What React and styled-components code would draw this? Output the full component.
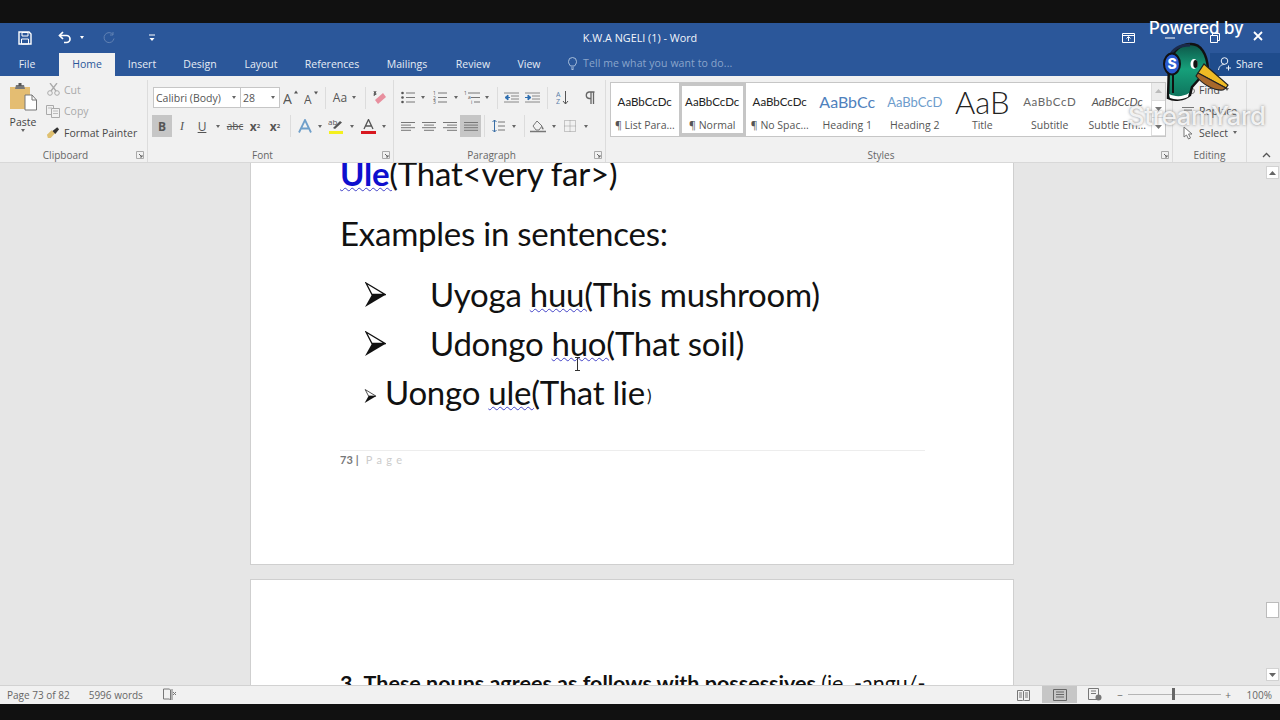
import React from 'react';
import styled, { createGlobalStyle } from 'styled-components';

const Global = createGlobalStyle`
  html, body { margin: 0; padding: 0; background: #111; }
  * { box-sizing: border-box; }
`;
const Root = styled.div`
  position: relative; width: 1280px; height: 720px; overflow: hidden; display: flex; flex-direction: column;
  font-family: "Open Sans", "Noto Sans", sans-serif; background: #111; color: #444;
`;
const Letterbox = styled.div`height: ${p => p.$h}px; background: #111; flex: none;`;
const TitleBar = styled.header`
  display: grid; grid-template-columns: 1fr auto 1fr; align-items: center; height: 29px; background: #2b579a; color: #fff; flex: none;
`;
const QuickAccess = styled.div`display: flex; align-items: center; padding-left: 17px;`;
const QuickBtn = styled.span`display: inline-flex; justify-content: center; align-items: center; width: ${p => p.$w}px; margin-right: ${p => p.$mr || 0}px; color: #fff; opacity: ${p => p.$faded ? .25 : 1};`;
const DocTitle = styled.div`font-size: 10.8px; color: #f2f5fa; padding-top: 0;`;
const WindowBtns = styled.div`display: flex; align-items: center; justify-content: flex-end;`;
const WinBtn = styled.span`display: inline-flex; justify-content: center; width: 44px; padding-left: ${p => p.$pl || 0}px; color: #fff;`;
const TabBar = styled.nav`display: flex; align-items: stretch; height: 24px; background: #2b579a; flex: none;`;
const Tab = styled.div`
  display: flex; align-items: center; justify-content: center; width: ${p => p.$w}px; margin-right: ${p => p.$mr || 0}px; font-size: 10.5px; padding-bottom: 2px; color: ${p => p.$active ? '#2b579a' : '#e6ecf5'};
  background: ${p => p.$active ? '#f1f1f1' : 'transparent'}; margin-top: 1px;
`;
const TellMe = styled.div`display: flex; align-items: center; gap: 6px; margin-left: 15px; font-size: 10.5px; letter-spacing: .1px; color: #8aa5cb; padding-bottom: 2px;`;
const Share = styled.div`
  margin-left: auto; width: 70px; background: #1f4c8c; display: flex; align-items: center; gap: 4px; padding: 0 0 2px 8px; color: #eef2f8; font-size: 10px; margin-top: 1px;
`;
const Ribbon = styled.div`display: flex; height: 87px; background: #f1f1f1; border-bottom: 1px solid #d8d8d8; padding-top: 4px; flex: none;`;
const Group = styled.section`display: flex; flex-direction: column; width: ${p => p.$w}px; border-right: 1px solid #dcdcdc; flex: none;`;
const GroupBody = styled.div`flex: 1; min-height: 0; display: flex; padding: ${p => p.$pad || '0'};`;
const GroupFoot = styled.div`
  height: 17px; display: grid; grid-template-columns: 1fr auto 1fr; align-items: center; font-size: 10px; color: #666; padding: 2px ${p => p.$plain ? 3 : 19}px 0 3px;
`;
const Launcher = styled.span`grid-column: 3; justify-self: end; display: inline-flex; color: #888; margin-right: -16px;`;
const PasteCol = styled.div`width: 46px; display: flex; flex-direction: column; align-items: center; padding-top: 3px; font-size: 10.5px; color: #444; flex: none;`;
const PasteLabel = styled.span`margin-top: 4px; line-height: 14px;`;
const ClipCol = styled.div`display: flex; flex-direction: column; flex: 1; margin-top: -1px;`;
const ClipRow = styled.div`
  height: 21.5px; display: flex; align-items: center; gap: 4px; font-size: 10.5px; white-space: nowrap; color: ${p => p.$muted ? '#a9a9a9' : '#4a4a4a'};
`;
const ClipIcon = styled.span`display: inline-flex; width: 14px; justify-content: center; flex: none;`;
const ToolStack = styled.div`display: flex; flex-direction: column; gap: 7px; padding-top: 7px;`;
const ToolRow = styled.div`display: flex; align-items: center; height: ${p => p.$h || 21}px; margin-left: ${p => p.$ml || 0}px;`;
const Tool = styled.span`
  display: inline-flex; align-items: center; justify-content: center; width: ${p => p.$w}px; height: 100%; flex: none; color: #555; font-size: 12px;
  background: ${p => p.$on ? '#c6c6c6' : 'transparent'}; font-family: ${p => p.$serif ? '"Liberation Serif", serif' : 'inherit'};
  font-weight: ${p => p.$bold ? 700 : 400}; font-style: ${p => p.$it ? 'italic' : 'normal'};
  text-decoration: ${p => p.$deco || 'none'};
`;
const SmallTool = styled(Tool)`font-size: 10px;`;
const Caret = styled.span`
  display: inline-flex; justify-content: center; align-items: center; width: ${p => p.$w || 6}px; flex: none;
  &::before { content: ""; border-left: 2.5px solid transparent; border-right: 2.5px solid transparent; border-top: 3px solid ${p => p.$light ? '#fff' : '#666'}; }
`;
const RibbonSep = styled.span`width: 1px; height: 22px; background: #dcdcdc; flex: none; margin-left: ${p => p.$ml || 0}px; margin-right: ${p => p.$mr || 0}px;`;
const SelectBox = styled.div`
  display: flex; align-items: center; justify-content: space-between; width: ${p => p.$w}px; height: 21px; flex: none; background: #fff; border: 1px solid #c6c6c6;
  margin-left: ${p => p.$ml || 0}px; padding: 0 3px 0 2px; font-size: 10.5px; color: #555; white-space: nowrap;
`;
const Sub = styled.sub`font-size: 6px;`;
const Sup = styled.sup`font-size: 6px;`;
const Gallery = styled.div`display: flex; height: 55px; width: 556px; margin-left: 4px; margin-top: 2px; background: #fff; border: 1px solid #c6c6c6;`;
const StyleItem = styled.div`
  width: 67.5px; flex: none; display: flex; flex-direction: column; align-items: center; overflow: hidden; height: 53px;
  padding: ${p => p.$sel ? '1px 2px 0' : '4px 4px 0'}; border: ${p => p.$sel ? '3px solid #c6c6c6' : '0'};
`;
const StyleSample = styled.div`
  height: 30px; line-height: 30px; width: 100%; overflow: hidden; white-space: nowrap; text-align: center; font-family: Lato, sans-serif;
  font-size: ${p => p.$size || 11.5}px; color: ${p => p.$color || '#222'}; letter-spacing: ${p => p.$ls || 0}px; font-style: ${p => p.$it ? 'italic' : 'normal'};
  font-weight: ${p => p.$light ? 300 : 400};
`;
const StyleLabel = styled.div`font-size: 10.5px; color: #555; white-space: nowrap; margin-top: 1px; line-height: 14px; overflow: hidden; width: 100%; text-align: center;`;
const GalleryScroll = styled.div`flex: 1; display: flex; flex-direction: column; border-left: 1px solid #dcdcdc;`;
const ScrollBtn = styled.span`flex: 1; display: flex; align-items: center; justify-content: center; background: ${p => p.$dim ? '#ececec' : '#fff'}; border-bottom: 1px solid #dcdcdc;`;
const Collapse = styled.div`flex: 1; display: flex; align-items: flex-end; justify-content: flex-end; padding: 0 9px 4px 0; color: #555;`;
const Doc = styled.main`flex: 1; min-height: 0; display: flex; background: #e6e6e6; overflow: hidden;`;
const Pages = styled.div`flex: 1; padding-left: 250px; display: flex; flex-direction: column; gap: 14px;`;
const Page = styled.article`
  position: relative; width: 764px; height: ${p => p.$h}px; flex: none; background: #fff; border: solid #cfcfcf; border-width: ${p => p.$top ? '1px 1px 0' : '0 1px 1px'};
  padding: ${p => p.$top ? '91px' : '0'} 88px 0 89px; overflow: hidden;
`;
const DocLine = styled.div`
  font-family: Lato, "Open Sans", sans-serif; font-size: 33px; height: 46px; line-height: 46px; color: #111; white-space: nowrap; margin-top: ${p => p.$mt}px; letter-spacing: -.25px;
  display: flex; align-items: center;
`;
const Squiggle = styled.span`text-decoration: underline wavy #4444c8 1px; text-underline-offset: 1px;`;
const BlueBold = styled.b`color: #0f0fce; font-weight: 700;`;
const SmallParen = styled.span`font-size: 17px; line-height: 18px; align-self: flex-end; padding-bottom: 10px; margin-left: 2px;`;
const BulletSlot = styled.span`display: inline-flex; width: ${p => p.$w}px; margin-left: ${p => p.$ml}px; margin-top: ${p => p.$mt || 0}px; align-items: center; flex: none;`;
const Pre = styled.span`white-space: pre;`;
const PageFooter = styled.footer`
  margin-top: 35px; border-top: 1px solid #ededed; padding-top: 1px; font-size: 11px; line-height: 16px; color: #777; font-family: Lato, sans-serif; font-weight: 700; display: flex; gap: 3px;
`;
const PageWord = styled.span`color: #ccc; font-weight: 400; letter-spacing: 4.4px; margin-left: 4px;`;
const NextHeading = styled.div`font-family: Lato, sans-serif; font-size: 21.5px; line-height: 24px; font-weight: 700; color: #111; white-space: pre; display: flex;`;
const NextNumber = styled.span`margin-right: 6px;`;
const NextNormal = styled.span`font-weight: 400;`;
const IBeam = styled.svg`position: absolute; left: 323px; top: 194px;`;
const ScrollBar = styled.aside`width: 16px; display: flex; flex-direction: column; align-items: center; padding: 3px 0 4px; flex: none;`;
const SbBtn = styled.span`width: 13px; height: 13px; background: #fff; border: 1px solid #d2d2d2; display: flex; align-items: center; justify-content: center;`;
const SbThumb = styled.span`width: 13px; height: 16px; background: #fff; border: 1px solid #bcbcbc; margin-top: 423px;`;
const SbGap = styled.span`flex: 1;`;
const Status = styled.footer`
  height: 19px; background: #f1f1f1; border-top: 1px solid #d2d2d2; display: flex; align-items: center; font-size: 10px; color: #666; padding: 0 0 1px 7px; flex: none;
`;
const StatusText = styled.span`margin-right: ${p => p.$mr}px; white-space: nowrap;`;
const StatusRight = styled.div`margin-left: auto; display: flex; align-items: center; height: 100%;`;
const ViewBtn = styled.span`display: inline-flex; align-items: center; justify-content: center; width: ${p => p.$w}px; height: 100%; background: ${p => p.$on ? '#c6c6c6' : 'transparent'}; color: #666;`;
const ZoomTrack = styled.span`position: relative; width: 93px; height: 1px; background: #b5b5b5; margin-left: 1px;`;
const ZoomThumb = styled.span`position: absolute; left: 44px; top: -6px; width: 3px; height: 12px; background: #666;`;
const ZoomLabel = styled.span`width: 45px; text-align: right; padding-right: 8px; font-size: 10px;`;
const PoweredBy = styled.div`position: absolute; left: 1149px; top: 18px; font-family: Inter, Lato, sans-serif; font-size: 16.8px; font-weight: 500; color: #fff; white-space: nowrap;`;
const CloseX = styled.svg`position: absolute; left: 1253px; top: 31px;`;
const Duck = styled.svg`position: absolute; left: 1160px; top: 41px;`;
const StreamYard = styled.div`
  position: absolute; left: 1128px; top: 100px; font-family: Inter, Lato, sans-serif; font-size: 25.6px; font-weight: 500; letter-spacing: -.3px; color: rgba(255,255,255,.85); white-space: nowrap;
  text-shadow: 0 0 3px rgba(110,110,110,.85);
`;

const S = ({ w, h, children, ...r }) => <svg width={w} height={h} viewBox={`0 0 ${w} ${h}`} fill="none" {...r}>{children}</svg>;
const LauncherIcon = () => <S w={8} h={8}><path d="M.5 7.5v-7h7v7z" stroke="#aaa" /><path d="M3 3l3 3M6 4v2H4" stroke="#666" /></S>;
const Lines = ({ rows, w = 14 }) => <S w={w} h={11}>{rows.map(([x1, x2], i) => <path key={i} d={`M${x1} ${1.5 + i * 2.6}H${x2}`} stroke="#777" />)}</S>;
const ListIcon = ({ marks }) => (
  <S w={14} h={13}>{[2, 6.5, 11].map((y, i) => <React.Fragment key={y}>
    {marks ? <text x="0" y={y + 2} fontSize="5" fill="#555" fontFamily="Open Sans">{i + 1}</text> : <circle cx="1.5" cy={y} r="1.3" fill="#555" />}
    <path d={`M5 ${y}H14`} stroke="#777" />
  </React.Fragment>)}</S>
);
const MultiIcon = () => <S w={16} h={13}><text x="0" y="4" fontSize="5" fill="#555" fontFamily="Open Sans">1</text><path d="M4 2h12M7 6.5h9M10 11h6" stroke="#777" /><text x="4" y="8" fontSize="5" fill="#555" fontFamily="Open Sans">a</text><text x="7" y="13" fontSize="5" fill="#555" fontFamily="Open Sans">i</text></S>;
const IndentIcon = ({ flip }) => <S w={15} h={11}><path d="M0 1h15M7 4h8M7 7h8M0 10h15" stroke="#888" /><path d={flip ? 'M0 5.5h4M3 3l3 2.5L3 8z' : 'M2 5.5h4M4 3L1 5.5 4 8z'} stroke="#2f6fb0" fill="#2f6fb0" /></S>;

const SaveIcon = () => <S w={14} h={14}><path d="M1 1h10l2 2v10H1z" stroke="#fff" strokeWidth="1.4" /><path d="M4 1.5h6v3.5H4zM3.5 8h7v5h-7z" stroke="#fff" /></S>;
const UndoIcon = () => <S w={15} h={13}><path d="M5 1L1.5 4.5 5 8" stroke="#fff" strokeWidth="1.7" /><path d="M2 4.5h6.5a3.5 3.5 0 0 1 0 7H6" stroke="#fff" strokeWidth="1.7" /></S>;
const RedoIcon = () => <S w={12} h={12}><path d="M10 2.5a5 5 0 1 0 1 4M10 0v3H7" stroke="#fff" /></S>;
const CustomizeIcon = () => <S w={6} h={8}><path d="M0 1h6" stroke="#fff" /><path d="M.5 4h5L3 7z" fill="#fff" /></S>;
const DisplayIcon = () => <S w={13} h={10}><path d="M.5.5h12v9H.5zM.5 2.5h12" stroke="#fff" /><path d="M6.5 8V4M4.5 5.5l2-2 2 2" stroke="#fff" /></S>;
const MinIcon = () => <S w={10} h={2}><path d="M0 1h10" stroke="#fff" /></S>;
const MaxIcon = () => <S w={10} h={10}><path d="M.5 2.5h7v7h-7zM2.5 2.5v-2h7v7h-2" stroke="#fff" /></S>;
const BulbIcon = () => <S w={9} h={13}><path d="M2.5 9C1.5 7.5.5 6.5.5 4.5a4 4 0 0 1 8 0c0 2-1 3-2 4.5zM3 11h3M3.5 12.5h2" stroke="#a9bfdc" /></S>;
const PersonIcon = () => <S w={14} h={14}><circle cx="6.5" cy="4" r="3.3" stroke="#eef2f8" /><path d="M.5 13c.5-4 3-5.5 6-5.5M10.5 8.500v5M8 11h5" stroke="#eef2f8" /></S>;
const PasteIcon = () => <S w={27} h={28}>
  <path d="M0 4h20v22H0z" fill="#e4bd72" /><path d="M6 2h8l1 4H5z" fill="#777" /><path d="M8.500 0h3v3h-3z" fill="#555" />
  <path d="M15 12h7l4.500 5v10H15z" fill="#fff" stroke="#777" /><path d="M22 12v5h4.500" stroke="#777" />
</S>;
const ScissorsIcon = () => <S w={13} h={13}><circle cx="3" cy="10" r="2.3" stroke="#aaa" /><circle cx="10" cy="10" r="2.3" stroke="#aaa" /><path d="M4 8l6-8M9 8L3 0" stroke="#aaa" strokeWidth="1.3" /></S>;
const CopyIcon = () => <S w={14} h={13}><path d="M.5.5h7v9h-7z" stroke="#aaa" fill="#f1f1f1" /><path d="M5.500 3.500h8v9h-8z" stroke="#aaa" fill="#f1f1f1" /><path d="M2 3h4M7 6h5M7 8.500h5" stroke="#bbb" /></S>;
const PainterIcon = () => <S w={15} h={13}><path d="M1 9l5-5 4 3-5 5.500H2z" fill="#dfc070" /><path d="M7 5l5-4 2 2-4 5z" fill="#333" /></S>;
const ClearIcon = () => <S w={15} h={14}><path d="M6 13l8-7-3-4-8 7z" fill="#e88f9e" /><path d="M2 0l1.500 4M4 0L2 5M1.500 3h3" stroke="#555" /></S>;
const GrowIcon = ({ up }) => <svg width="16" height="17" viewBox="0 0 16 17" fill="none"><text x="0" y="15" fontSize={up ? 14 : 12} fill="#555" fontFamily="Open Sans">A</text><path d={up ? 'M11 4.500h4l-2-3z' : 'M10 2.500h4l-2 3z'} fill="#555" /></svg>;
const EffectIcon = () => <S w={14} h={14}><path d="M1 13.500L7 1l6 12.500M3.500 9.500h7" stroke="#6f9fca" strokeWidth="1.800" /></S>;
const HighlightIcon = () => <S w={16} h={16}><text x="0" y="7" fontSize="8" fill="#555" fontFamily="Open Sans">ab</text><path d="M5 10l7-7 2 1.500L7 11z" fill="#555" /><path d="M1 13h14v3H1z" fill="#f4f01e" /></S>;
const ColorIcon = () => <S w={15} h={15}><path d="M3 10l4.500-9.500L12 10M4.500 7h6" stroke="#555" strokeWidth="1.300" /><path d="M0 12h15v3H0z" fill="#d81820" /></S>;
const SortIcon = () => <S w={13} h={15}><text x="0" y="6.500" fontSize="7" fill="#5a7ea8" fontFamily="Open Sans">A</text><text x="0" y="14" fontSize="7" fill="#5a7ea8" fontFamily="Open Sans">Z</text><path d="M9.500 1v13M7 11l2.500 3 2.500-3" stroke="#555" /></S>;
const PilcrowIcon = () => <S w={10} h={13}><path d="M6 1v12M8.500 1v12M9.500 1H4a3.300 3.300 0 0 0 0 6.500h2" stroke="#666" strokeWidth="1.300" /></S>;
const SpacingIcon = () => <S w={13} h={14}><path d="M2.500 1v12M.5 3l2-2 2 2M.5 11l2 2 2-2" stroke="#3a6ea5" /><path d="M6 3h7M6 7h7M6 11h7" stroke="#777" /></S>;
const ShadeIcon = () => <S w={16} h={14}><path d="M3 7l4-5 5 5-3 4H6z" stroke="#777" /><path d="M12 7c2 2 2 3.500 1 3.500S11 9 12 7z" fill="#777" /><path d="M0 12.500h16" stroke="#777" strokeWidth="1.500" /></S>;
const BorderIcon = () => <S w={12} h={12}><path d="M.5.5h11v11H.5zM6 .5v11M.5 6h11" stroke="#999" strokeDasharray="1 1" /></S>;
const BinIcon = () => <S w={13} h={11}><circle cx="3" cy="7" r="2.500" stroke="#777" /><circle cx="10" cy="7" r="2.500" stroke="#777" /><path d="M4 2h5" stroke="#777" /></S>;
const CursorIcon = () => <S w={11} h={14}><path d="M1 1v10l2.500-2 2 4 2-1-2-4H9z" stroke="#777" fill="#fff" /></S>;
const ChevUp = () => <S w={9} h={6}><path d="M1 5l3.500-3.500L8 5" stroke="#555" strokeWidth="1.300" /></S>;
const Tri = ({ up, c = '#777' }) => <S w={7} h={4}><path d={up ? 'M0 4h7L3.500 0z' : 'M0 0h7L3.500 4z'} fill={c} /></S>;
const ProofIcon = () => <S w={14} h={13}><path d="M.5 1h6l1 1v10l-1-1h-6zM7.500 2v10" stroke="#777" /><path d="M10 4l3 3M13 4l-3 3M9 1v11" stroke="#777" /></S>;
const ReadIcon = () => <S w={13} h={12}><path d="M.5 1.500h5l1 1 1-1h5v10h-5l-1 .500-1-.500h-5zM6.500 2.500v9M2 4h3M2 6h3M2 8h3M8 4h3M8 6h3M8 8h3" stroke="#777" /></S>;
const PrintIcon = () => <S w={14} h={12}><path d="M.5.5h13v11H.5zM3 3h8M3 5.500h8M3 8h8" stroke="#666" /></S>;
const WebIcon = () => <S w={14} h={13}><path d="M.5.5h10v11H.5zM3 3h5M3 5.500h5" stroke="#777" /><circle cx="10.500" cy="9.500" r="3" fill="#777" /></S>;
const Bullet = ({ w, h }) => <svg width={w} height={h} viewBox="0 0 21 25"><path d="M1 1L20 12.500H7z" fill="#fff" stroke="#111" strokeWidth="1.300" /><path d="M0 25L21 12.500H7z" fill="#111" /></svg>;

const TABS = [['File', 54, false, 5], ['Home', 56, true], ['Insert', 54], ['Design', 62], ['Layout', 60], ['References', 82], ['Mailings', 68], ['Review', 64], ['View', 48]];
const STYLES = [
  ['AaBbCcDc', '¶ List Para...'], ['AaBbCcDc', '¶ Normal', { sel: true }], ['AaBbCcDc', '¶ No Spac...'],
  ['AaBbCc', 'Heading 1', { size: 16, color: '#4f81bd' }], ['AaBbCcD', 'Heading 2', { size: 13, color: '#6d9ccc' }],
  ['AaB', 'Title', { size: 31, color: '#222', light: true }], ['AaBbCcD', 'Subtitle', { color: '#666', ls: .6 }], ['AaBbCcDc', 'Subtle Em...', { color: '#555', it: true }],
];

export default function App() {
  return (
    <Root>
      <Global />
      <Letterbox $h={23} />
      <TitleBar>
        <QuickAccess>
          <QuickBtn $w={16} $mr={20}><SaveIcon /></QuickBtn>
          <QuickBtn $w={24}><UndoIcon /></QuickBtn>
          <Caret $w={10} $light />
          <QuickBtn $w={44} $faded><RedoIcon /></QuickBtn>
          <QuickBtn $w={42}><CustomizeIcon /></QuickBtn>
        </QuickAccess>
        <DocTitle>K.W.A NGELI (1) - Word</DocTitle>
        <WindowBtns>
          <WinBtn $pl={4}><DisplayIcon /></WinBtn>
          <WinBtn><MinIcon /></WinBtn>
          <WinBtn $pl={2}><MaxIcon /></WinBtn>
          <WinBtn />
        </WindowBtns>
      </TitleBar>
      <TabBar>
        {TABS.map(([name, w, active, mr]) => <Tab key={name} $w={w} $active={active} $mr={mr}>{name}</Tab>)}
        <TellMe><BulbIcon />Tell me what you want to do...</TellMe>
        <Share><PersonIcon />Share</Share>
      </TabBar>
      <Ribbon>
        <Group $w={148}>
          <GroupBody>
            <PasteCol><PasteIcon /><PasteLabel>Paste</PasteLabel><Caret /></PasteCol>
            <ClipCol>
              <ClipRow $muted><ClipIcon><ScissorsIcon /></ClipIcon>Cut</ClipRow>
              <ClipRow $muted><ClipIcon><CopyIcon /></ClipIcon>Copy</ClipRow>
              <ClipRow><ClipIcon><PainterIcon /></ClipIcon>Format Painter</ClipRow>
            </ClipCol>
          </GroupBody>
          <GroupFoot><span /><span>Clipboard</span><Launcher><LauncherIcon /></Launcher></GroupFoot>
        </Group>
        <Group $w={246}>
          <GroupBody>
            <ToolStack>
              <ToolRow>
                <SelectBox $w={88} $ml={5}>Calibri (Body)<Caret /></SelectBox>
                <SelectBox $w={40} $ml={-1}>28<Caret /></SelectBox>
                <Tool $w={21}><GrowIcon up /></Tool>
                <Tool $w={21}><GrowIcon /></Tool>
                <RibbonSep $ml={3} $mr={3} />
                <Tool $w={22}>Aa</Tool>
                <Caret />
                <RibbonSep $ml={8} />
                <Tool $w={26}><ClearIcon /></Tool>
              </ToolRow>
              <ToolRow $h={22} $ml={4}>
                <Tool $w={20} $on $bold>B</Tool>
                <Tool $w={20} $it $serif>I</Tool>
                <Tool $w={20} $deco="underline">U</Tool>
                <Caret $w={12} />
                <SmallTool $w={22} $deco="line-through">abc</SmallTool>
                <Tool $w={18} $bold>x<Sub>2</Sub></Tool>
                <Tool $w={22} $bold>x<Sup>2</Sup></Tool>
                <RibbonSep $ml={4} $mr={2} />
                <Tool $w={24}><EffectIcon /></Tool><Caret />
                <Tool $w={26}><HighlightIcon /></Tool><Caret />
                <Tool $w={26}><ColorIcon /></Tool><Caret />
              </ToolRow>
            </ToolStack>
          </GroupBody>
          <GroupFoot><span /><span>Font</span><Launcher><LauncherIcon /></Launcher></GroupFoot>
        </Group>
        <Group $w={212}>
          <GroupBody>
            <ToolStack>
              <ToolRow $ml={4}>
                <Tool $w={20}><ListIcon /></Tool><Caret $w={10} />
                <Tool $w={24}><ListIcon marks /></Tool><Caret $w={8} />
                <Tool $w={24}><MultiIcon /></Tool><Caret />
                <RibbonSep $ml={7} />
                <Tool $w={27}><IndentIcon /></Tool>
                <Tool $w={15}><IndentIcon flip /></Tool>
                <RibbonSep $ml={7} />
                <Tool $w={28}><SortIcon /></Tool>
                <Tool $w={28}><PilcrowIcon /></Tool>
              </ToolRow>
              <ToolRow $h={22} $ml={4}>
                <Tool $w={20}><Lines rows={[[0, 14], [0, 10], [0, 14], [0, 10]]} /></Tool>
                <Tool $w={21}><Lines rows={[[0, 14], [2, 12], [0, 14], [2, 12]]} /></Tool>
                <Tool $w={21}><Lines rows={[[0, 14], [4, 14], [0, 14], [4, 14]]} /></Tool>
                <Tool $w={21} $on><Lines rows={[[0, 14], [0, 14], [0, 14], [0, 14]]} /></Tool>
                <RibbonSep $ml={3} />
                <Tool $w={26}><SpacingIcon /></Tool><Caret />
                <RibbonSep $ml={7} />
                <Tool $w={26}><ShadeIcon /></Tool><Caret />
                <Tool $w={25}><BorderIcon /></Tool><Caret $w={8} />
              </ToolRow>
            </ToolStack>
          </GroupBody>
          <GroupFoot><span /><span>Paragraph</span><Launcher><LauncherIcon /></Launcher></GroupFoot>
        </Group>
        <Group $w={567}>
          <GroupBody>
            <Gallery>
              {STYLES.map(([s, l, o = {}]) => (
                <StyleItem key={l} $sel={o.sel}>
                  <StyleSample $size={o.size} $color={o.color} $ls={o.ls} $it={o.it} $light={o.light}>{s}</StyleSample>
                  <StyleLabel>{l}</StyleLabel>
                </StyleItem>
              ))}
              <GalleryScroll>
                <ScrollBtn $dim><Tri up c="#bbb" /></ScrollBtn>
                <ScrollBtn><Tri /></ScrollBtn>
                <ScrollBtn><Tri /></ScrollBtn>
              </GalleryScroll>
            </Gallery>
          </GroupBody>
          <GroupFoot><span /><span>Styles</span><Launcher><LauncherIcon /></Launcher></GroupFoot>
        </Group>
        <Group $w={74}>
          <GroupBody $pad="0 0 0 8px">
            <ClipCol>
              <ClipRow><ClipIcon><BinIcon /></ClipIcon>Find<Caret /></ClipRow>
              <ClipRow><ClipIcon><Lines rows={[[0, 12], [2, 10]]} w={12} /></ClipIcon>Replace</ClipRow>
              <ClipRow><ClipIcon><CursorIcon /></ClipIcon>Select<Caret /></ClipRow>
            </ClipCol>
          </GroupBody>
          <GroupFoot $plain><span /><span>Editing</span></GroupFoot>
        </Group>
        <Collapse><ChevUp /></Collapse>
      </Ribbon>
      <Doc>
        <Pages>
          <Page $h={402}>
            <DocLine $mt={-13}><span><Squiggle><BlueBold>Ule</BlueBold>(</Squiggle>That&lt;very far&gt;)</span></DocLine>
            <DocLine $mt={14}>Examples in sentences:</DocLine>
            <DocLine $mt={15}><BulletSlot $w={65} $ml={25}><Bullet w={21} h={25} /></BulletSlot><Pre>Uyoga <Squiggle>huu(</Squiggle>This mushroom)</Pre></DocLine>
            <DocLine $mt={3}><BulletSlot $w={65} $ml={25}><Bullet w={21} h={25} /></BulletSlot><Pre>Udongo <Squiggle>huo(</Squiggle>That soil)</Pre></DocLine>
            <DocLine $mt={3}><BulletSlot $w={21} $ml={24} $mt={7}><Bullet w={13} h={14} /></BulletSlot><Pre>Uongo <Squiggle>ule(</Squiggle>That lie</Pre><SmallParen>)</SmallParen></DocLine>
            <PageFooter><span>73</span><span>|</span><PageWord>Page</PageWord></PageFooter>
            <IBeam width="7" height="14" viewBox="0 0 7 14"><path d="M1 .5h5M3.500.5v13M1 13.500h5" stroke="#333" /></IBeam>
          </Page>
          <Page $top $h={300}>
            <NextHeading><NextNumber>3.</NextNumber>These nouns agrees as follows with possessives <NextNormal>(ie. -angu/-</NextNormal></NextHeading>
          </Page>
        </Pages>
        <ScrollBar>
          <SbBtn><Tri up c="#666" /></SbBtn>
          <SbThumb />
          <SbGap />
          <SbBtn><Tri c="#666" /></SbBtn>
        </ScrollBar>
      </Doc>
      <Status>
        <StatusText $mr={19}>Page 73 of 82</StatusText>
        <StatusText $mr={20}>5996 words</StatusText>
        <ProofIcon />
        <StatusRight>
          <ViewBtn $w={38}><ReadIcon /></ViewBtn>
          <ViewBtn $w={35} $on><PrintIcon /></ViewBtn>
          <ViewBtn $w={36}><WebIcon /></ViewBtn>
          <ViewBtn $w={14}>−</ViewBtn>
          <ZoomTrack><ZoomThumb /></ZoomTrack>
          <ViewBtn $w={14}>+</ViewBtn>
          <ZoomLabel>100%</ZoomLabel>
        </StatusRight>
      </Status>
      <Letterbox $h={16} />
      <PoweredBy>Powered by</PoweredBy>
      <CloseX width="10" height="10" viewBox="0 0 10 10"><path d="M1 1l8 8M9 1L1 9" stroke="#fff" strokeWidth="1.800" /></CloseX>
      <Duck width="72" height="62" viewBox="0 0 72 62">
        <defs>
          <linearGradient id="duckHead" x1="0" y1="0" x2="0" y2="1">
            <stop offset="0" stopColor="#0d5548" />
            <stop offset=".45" stopColor="#16a07a" />
            <stop offset="1" stopColor="#0e6f5a" />
          </linearGradient>
        </defs>
        <path d="M8 57L9 24C12 8 22 3 31 3c10 0 16 10 17 25L32 46l-2 8c-6 5-16 6-22 3z" fill="url(#duckHead)" stroke="#111" strokeWidth="2.500" />
        <path d="M9 53c6 3 14 3 20-1l-1 4c-6 3-13 3-18 1z" fill="#fff" />
        <path d="M13 28v24" stroke="#111" strokeWidth="2" />
        <path d="M10 16C12 8 20 4 30 4" stroke="#1b2a4a" strokeWidth="3" fill="none" />
        <ellipse cx="12" cy="23" rx="8" ry="10.500" fill="#2a5bd0" stroke="#111" strokeWidth="2" />
        <text x="12" y="28" fontSize="14" fontWeight="800" fontFamily="Inter, sans-serif" textAnchor="middle" fill="#fff">S</text>
        <ellipse cx="34" cy="23" rx="3.500" ry="5" fill="#fff" />
        <ellipse cx="35.500" cy="23" rx="2.200" ry="4" fill="#111" />
        <path d="M38 32l6-9 24 21-2 3z" fill="#efbb24" stroke="#222" strokeWidth="1.200" />
        <path d="M36 35l2-3 28 15-3 2c-8 1-20-5-27-14z" fill="#a8682a" stroke="#222" strokeWidth="1.200" />
      </Duck>
      <StreamYard>StreamYard</StreamYard>
    </Root>
  );
}
